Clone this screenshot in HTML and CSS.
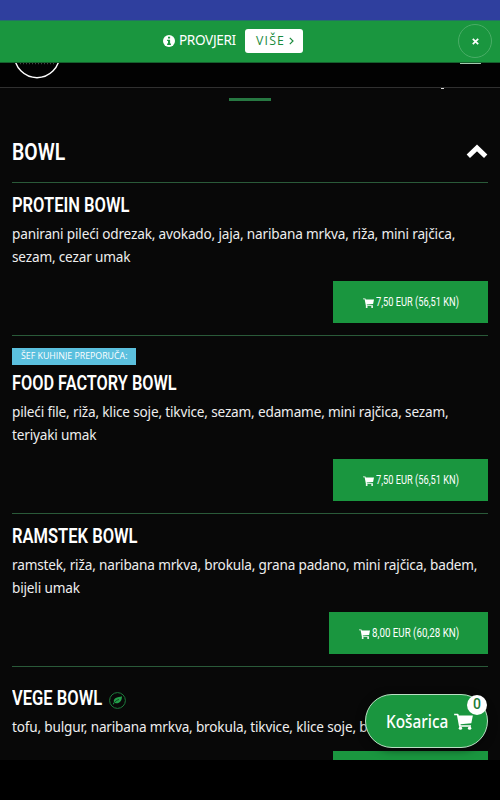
FILE: index.html
```html
<!DOCTYPE html>
<html lang="hr">
<head>
    <meta charset="UTF-8">
    <meta name="viewport" content="width=device-width, initial-scale=1.0">
    <title>Bowl</title>
    <link rel="stylesheet" href="styles.css">
</head>
<body>

    <svg class="symbols" aria-hidden="true">
        <symbol id="cart" viewBox="0 0 22 20">
            <path d="M0 .8h4.2c.5 0 .8.3.9.8l.3 1.2H22l-1.8 9.200L7.500 13.200l.2 1.300h12.100v1.700H5.800L3.300 2.600H0z"/>
            <circle cx="7.400" cy="17.800" r="2"/>
            <circle cx="18.200" cy="17.800" r="2"/>
        </symbol>
    </svg>

    <div class="screen">
        <div class="strip"></div>

        <!-- Obavijest -->
        <div class="notice">
            <svg class="info" viewBox="0 0 12 12">
                <circle cx="6" cy="6" r="6" fill="#fff"/>
                <path d="M5 1.8h2.1v1.8H5zM4.1 4.7h3v3.8h.8V10H4.1V8.5H5V6.1h-.9z" fill="#1a963f"/>
            </svg>
            <span class="notice-text">PROVJERI</span>
            <a class="more" href="#">VIŠE
                <svg viewBox="0 0 5 8"><path d="M.8.8 4 4 .8 7.2"/></svg>
            </a>
            <button class="close" type="button">
                <svg viewBox="0 0 7 7"><path d="M.8.8l5.4 5.4M6.2.8.8 6.2"/></svg>
            </button>
        </div>

        <header class="header">
            <svg class="logo" viewBox="0 0 46 18">
                <circle cx="23" cy="-7.8" r="22.5"/>
                <path class="logo-dots" d="M6 .7h34"/>
            </svg>
            <span class="burger"></span>
        </header>

        <main class="menu">
            <div class="menu-top"><span class="underline"></span><span class="dot"></span></div>

            <div class="category">
                <h2 class="narrow">BOWL</h2>
                <svg viewBox="0 0 22 15"><path d="M2.3 12.300 11 3.900l8.700 8.400"/></svg>
            </div>

            <div class="item">
                <h3 class="narrow">PROTEIN BOWL</h3>
                <p>panirani pileći odrezak, avokado, jaja, naribana mrkva, riža, mini rajčica, sezam, cezar umak</p>
                <button class="price" type="button"><svg><use href="#cart"/></svg><span>7,50 EUR (56,51 KN)</span></button>
            </div>

            <div class="item">
                <div class="badge">ŠEF KUHINJE PREPORUČA:</div>
                <h3 class="narrow food">FOOD FACTORY BOWL</h3>
                <p>pileći file, riža, klice soje, tikvice, sezam, edamame, mini rajčica, sezam, teriyaki umak</p>
                <button class="price" type="button"><svg><use href="#cart"/></svg><span>7,50 EUR (56,51 KN)</span></button>
            </div>

            <div class="item">
                <h3 class="narrow">RAMSTEK BOWL</h3>
                <p>ramstek, riža, naribana mrkva, brokula, grana padano, mini rajčica, badem, bijeli umak</p>
                <button class="price wide" type="button"><svg><use href="#cart"/></svg><span>8,00 EUR (60,28 KN)</span></button>
            </div>

            <div class="item vege">
                <div class="title-row">
                    <h3 class="narrow">VEGE BOWL</h3>
                    <svg class="leaf" viewBox="0 0 17 17">
                        <circle cx="8.5" cy="8.5" r="7.9"/>
                        <path d="M13 4.2C11.500 5.300 8.300 4.700 6.300 6.200 4.600 7.500 4.600 9 5 10L3.700 12.200l.7.4 1.300-1.800c1.600 1 3.800.6 5.200-.8C12.700 8.200 12.900 6 13 4.200z"/>
                        <path class="vein" d="M5.200 10.800C6.300 9.200 7.800 8.200 10 7.500"/>
                    </svg>
                </div>
                <p>tofu, bulgur, naribana mrkva, brokula, tikvice, klice soje, b</p>
                <button class="price" type="button"></button>
            </div>
        </main>

        <!-- Košarica -->
        <a class="basket" href="#">
            <span class="basket-text">Košarica</span>
            <svg><use href="#cart"/></svg>
            <span class="count">0</span>
        </a>
    </div>

</body>
</html>
```
FILE: styles.css
```css
* {
    box-sizing: border-box;
}
body {
    margin: 0;
    height: 800px;
    overflow: hidden;
    background-color: #000;
    color: #fff;
    font-family: "Noto Sans", sans-serif;
}
.symbols {
    display: none;
}
.screen {
    position: relative;
    height: 760px;
    overflow: hidden;
    background-color: #080808;
}
.strip {
    height: 20px;
    background-color: #2f3f9e;
}
.notice {
    position: relative;
    display: flex;
    align-items: center;
    height: 43px;
    padding: 0 0 2px 163px;
    border-top: 1px solid #237266;
    border-bottom: 1px solid #15602d;
    background-color: #1a963f;
}
.info {
    width: 12px;
    height: 12px;
    margin-right: 4px;
}
.notice-text {
    width: 66px;
    font-size: 13.6px;
    letter-spacing: -0.35px;
    line-height: 20px;
    padding-bottom: 1px;
    white-space: nowrap;
}
.more {
    display: flex;
    align-items: center;
    gap: 4px;
    width: 58px;
    height: 24px;
    padding-left: 11px;
    border-radius: 3px;
    background-color: #fff;
    color: #1a8a3c;
    font-family: "Open Sans", sans-serif;
    font-size: 12.3px;
    letter-spacing: 1.2px;
    text-decoration: none;
}
.more svg {
    width: 5px;
    height: 8px;
    fill: none;
    stroke: #1a8a3c;
    stroke-width: 1.2;
}
.close {
    position: absolute;
    top: 3px;
    right: 8px;
    display: flex;
    align-items: center;
    justify-content: center;
    width: 34px;
    height: 34px;
    padding: 0;
    border: 1px solid #49ad66;
    border-radius: 50%;
    background: none;
}
.close svg {
    width: 7px;
    height: 7px;
    stroke: #fff;
    stroke-width: 1.7;
}
.header {
    display: flex;
    align-items: flex-start;
    justify-content: space-between;
    height: 25px;
    padding: 0 19px 0 14px;
    border-bottom: 1px solid #303030;
    background-color: #020202;
}
.logo {
    width: 46px;
    height: 18px;
    fill: none;
    stroke: #fff;
    stroke-width: 1.4;
}
.logo .logo-dots {
    stroke: #555;
    stroke-width: 1;
    stroke-dasharray: 1 2;
}
.burger {
    width: 21px;
    height: 1px;
    background-color: #a5c9af;
}
.menu {
    padding: 0 12px;
}
.menu-top {
    position: relative;
    display: flex;
    justify-content: center;
    height: 34px;
    padding-top: 10px;
}
.underline {
    width: 42px;
    height: 3px;
    background-color: #277842;
}
.dot {
    position: absolute;
    top: 0;
    right: 44px;
    width: 3px;
    height: 1px;
    background-color: #ddd;
}
.category {
    display: flex;
    align-items: center;
    justify-content: space-between;
    height: 61px;
    border-bottom: 1px solid #2a5a39;
}
.category svg {
    width: 22px;
    height: 15px;
    margin-top: -1px;
    fill: none;
    stroke: #fff;
    stroke-width: 4.8;
}
.narrow {
    margin: 0;
    font-family: Roboto, sans-serif;
    font-weight: 600;
    white-space: nowrap;
    transform-origin: left center;
}
h2.narrow {
    font-size: 23.5px;
    transform: scaleX(0.825);
}
h3.narrow {
    font-size: 19.7px;
    line-height: 20px;
    height: 20px;
    transform: scaleX(0.84);
}
h3.food {
    transform: scaleX(0.828);
}
.item {
    display: flow-root;
    padding: 13px 0 12px;
    border-bottom: 1px solid #2a5a39;
}
.item p {
    margin: 6px 0 13px;
    color: #eee;
    font-size: 13.6px;
    letter-spacing: -0.17px;
    line-height: 23px;
}
.badge {
    width: 124px;
    height: 17px;
    margin: -1px 0 9px;
    padding-left: 9px;
    background-color: #5bc0de;
    font-family: "Open Sans", sans-serif;
    font-size: 8.8px;
    line-height: 16px;
    white-space: nowrap;
}
.price {
    display: flex;
    align-items: center;
    width: 155px;
    height: 42px;
    margin-left: auto;
    padding: 0 0 2px 30px;
    border: none;
    background-color: #1a963f;
    color: #fff;
}
.price.wide {
    width: 159px;
}
.price svg {
    flex: none;
    width: 11px;
    height: 10px;
    margin: 4px 2px 0 0;
    fill: #fff;
}
.price span {
    font-family: Roboto, sans-serif;
    font-size: 12.5px;
    white-space: nowrap;
    transform: scaleX(0.742);
    transform-origin: left center;
}
.price.wide span {
    transform: scaleX(0.78);
}
.title-row {
    display: flex;
    align-items: center;
    height: 20px;
}
.vege {
    padding-top: 22px;
    white-space: nowrap;
}
.title-row h3 {
    width: 97px;
}
.leaf {
    width: 17px;
    height: 17px;
    margin-top: 2px;
    fill: #23a04a;
}
.leaf circle {
    fill: none;
    stroke: #1d7a3b;
}
.leaf .vein {
    fill: none;
    stroke: #080808;
    stroke-width: 0.6;
}
.basket {
    position: absolute;
    right: 12px;
    bottom: 12px;
    display: flex;
    align-items: center;
    width: 123px;
    height: 54px;
    padding-left: 20px;
    border: 1px solid #b9dfc3;
    border-radius: 27px;
    background-color: #1a963f;
    box-shadow: 0 2px 8px rgba(0, 0, 0, 0.5);
    color: #fff;
    text-decoration: none;
}
.basket-text {
    width: 68px;
    padding-bottom: 2px;
    font-size: 18.5px;
    font-weight: 500;
    transform: scaleX(0.83);
    transform-origin: left center;
}
.basket svg {
    width: 19px;
    height: 17px;
    fill: #fff;
}
.count {
    position: absolute;
    top: 0;
    right: 0;
    width: 20px;
    height: 20px;
    border-radius: 10px;
    background-color: #fff;
    color: #1a7a38;
    font-family: Roboto, sans-serif;
    font-size: 14px;
    font-weight: 500;
    line-height: 19px;
    text-align: center;
}
```
